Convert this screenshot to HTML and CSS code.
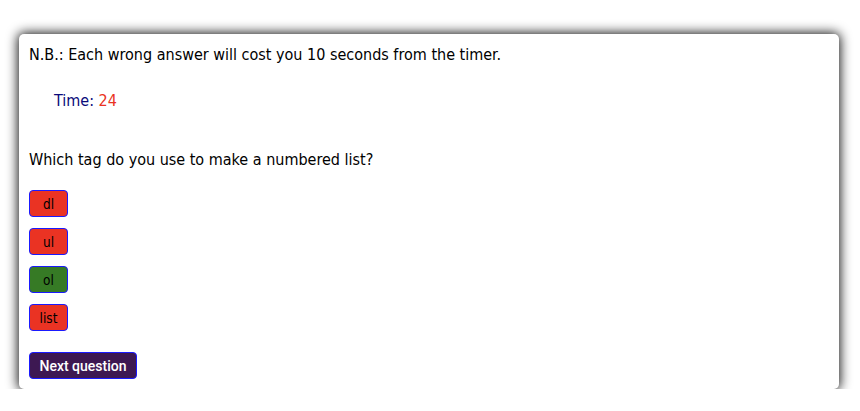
FILE: index.html
```html
<!DOCTYPE html>
<html>
<head>
<meta charset="utf-8">
<link rel="stylesheet" href="styles.css">
</head>
<body>
<div class="card">
  <p class="note">N.B.: Each wrong answer will cost you 10 seconds from the timer.</p>
  <p class="timer">Time: <span class="time-left">24</span></p>
  <p class="question">Which tag do you use to make a numbered list?</p>
  <div class="choices">
    <button class="choice wrong">dl</button>
    <button class="choice wrong">ul</button>
    <button class="choice right">ol</button>
    <button class="choice wrong">list</button>
  </div>
  <button class="next">Next question</button>
</div>
</body>
</html>
```

FILE: styles.css
```css
html, body {
  margin: 0;
  padding: 0;
  background: #ffffff;
}
body {
  padding: 34px 21px 0 19px;
  font-family: "DejaVu Sans Condensed", "DejaVu Sans", sans-serif;
  font-size: 16px;
  color: #000;
}
.card {
  background: #fff;
  border-radius: 5px;
  box-shadow: 0 0 12px 1px rgba(0, 0, 0, 0.95);
  padding: 11px 10px 10px 10px;
  height: 355px;
  box-sizing: border-box;
  display: flex;
  flex-direction: column;
  align-items: flex-start;
}
p {
  margin: 0;
  line-height: 19px;
}
.timer {
  margin-top: 27px;
  padding-left: 25px;
  color: #0a0a7a;
}
.time-left {
  color: #ea3323;
}
.question {
  margin-top: 40px;
}
.choices {
  margin-top: 21px;
  display: flex;
  flex-direction: column;
  gap: 11px;
  align-items: flex-start;
}
.choice {
  width: 39px;
  height: 27px;
  border: 1px solid #1a1aff;
  border-radius: 4px;
  font-family: "DejaVu Sans Condensed", "DejaVu Sans", sans-serif;
  font-size: 13.5px;
  color: #000;
  padding: 0;
}
.wrong {
  background: #ea3323;
}
.right {
  background: #367a25;
}
.next {
  margin-top: 21px;
  width: 108px;
  height: 27px;
  background: #3d1852;
  color: #fff;
  border: 1px solid #1a1aff;
  border-radius: 4px;
  font-family: Roboto, "Liberation Sans", sans-serif;
  font-size: 14px;
  font-weight: 500;
  padding: 0;
}
```
